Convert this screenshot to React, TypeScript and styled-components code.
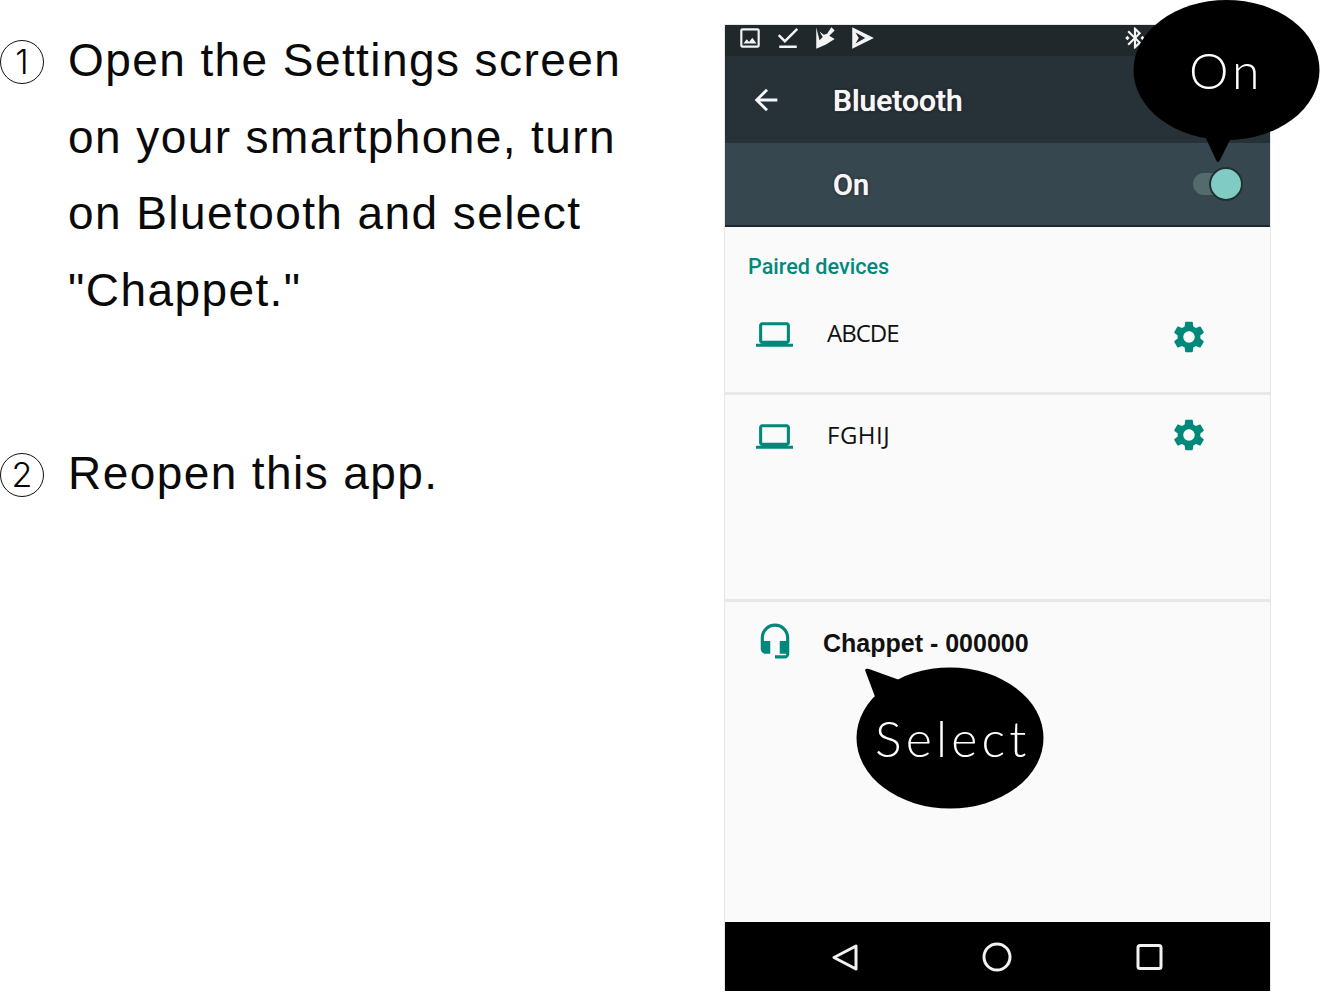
import styled, { createGlobalStyle } from "styled-components";
import {
  MdArrowBack,
  MdBluetoothConnected,
  MdDownloadDone,
  MdHeadsetMic,
  MdLaptop,
  MdOutlineImage,
  MdSettings,
} from "react-icons/md";

const GlobalStyle = createGlobalStyle`
  html, body {
    margin: 0;
    padding: 0;
    background: #ffffff;
  }
  * {
    box-sizing: border-box;
  }
`;

const App = () => {
  return (
    <Page>
      <GlobalStyle />
      <Steps>
        <Step>
          <StepNumber>1</StepNumber>
          <StepText>
            Open the Settings screen
            <br />
            on your smartphone, turn
            <br />
            on Bluetooth and select
            <br />
            "Chappet."
          </StepText>
        </Step>
        <Step>
          <StepNumber>2</StepNumber>
          <StepText>Reopen this app.</StepText>
        </Step>
      </Steps>

      <Phone>
        <StatusBar>
          <MdOutlineImage size={26} />
          <MdDownloadDone size={30} />
          <StoreIcon viewBox="0 0 24 24">
            <path
              d="M3 2v20l9-4 8-5-5-3 5-5-3-3-4 6-3 1-4-3 3 5-3 3z"
              fill="#f4f4f4"
            />
          </StoreIcon>
          <StoreIcon viewBox="0 0 24 24">
            <path
              d="M3 2v20l20-10L3 2zm3 5 9 5-9 5 3-5-3-5z"
              fill="#f4f4f4"
              fillRule="evenodd"
            />
          </StoreIcon>
          <StatusRight>
            <MdBluetoothConnected size={26} />
          </StatusRight>
        </StatusBar>

        <AppBar>
          <MdArrowBack size={34} />
          <AppBarTitle>Bluetooth</AppBarTitle>
        </AppBar>

        <SwitchRow>
          <SwitchLabel>On</SwitchLabel>
          <Toggle>
            <ToggleThumb />
          </Toggle>
        </SwitchRow>

        <PairedSection>
          <SectionLabel>Paired devices</SectionLabel>
          <DeviceRow>
            <DeviceIcon>
              <MdLaptop size={37} />
            </DeviceIcon>
            <DeviceName $tracking={-1}>ABCDE</DeviceName>
            <GearIcon $offset={3}>
              <MdSettings size={38} />
            </GearIcon>
          </DeviceRow>
        </PairedSection>

        <DeviceSection>
          <DeviceRow>
            <DeviceIcon>
              <MdLaptop size={37} />
            </DeviceIcon>
            <DeviceName $tracking={0.5}>FGHIJ</DeviceName>
            <GearIcon $offset={-1}>
              <MdSettings size={38} />
            </GearIcon>
          </DeviceRow>
        </DeviceSection>

        <AvailableSection>
          <HeadsetIcon>
            <MdHeadsetMic size={38} />
          </HeadsetIcon>
          <AvailableName>Chappet - 000000</AvailableName>
        </AvailableSection>

        <NavBar>
          <NavIcon viewBox="0 0 30 30">
            <path d="M26 4v23L4 15.5 26 4z" />
          </NavIcon>
          <NavIcon viewBox="0 0 30 30">
            <circle cx="15" cy="15" r="13" />
          </NavIcon>
          <NavIcon viewBox="0 0 30 30">
            <rect x="4" y="3.5" width="23" height="23" rx="2" />
          </NavIcon>
        </NavBar>

        <OnBubble>
          <BubbleShape viewBox="0 0 187 165">
            <ellipse cx="93.5" cy="70" rx="93" ry="70" fill="#000" />
            <path d="M70 132h31l-14 28q-2 4-4 0z" fill="#000" />
          </BubbleShape>
          <OnBubbleText>On</OnBubbleText>
        </OnBubble>

        <SelectBubble>
          <BubbleShape viewBox="0 0 188 143">
            <ellipse cx="94" cy="72" rx="93.5" ry="70.5" fill="#000" />
            <path d="M9 4q1-2 4-1l36 13-28 20z" fill="#000" />
          </BubbleShape>
          <SelectBubbleText>Select</SelectBubbleText>
        </SelectBubble>
      </Phone>
    </Page>
  );
};

export default App;

const Page = styled.div`
  width: 1320px;
  height: 993px;
  overflow: hidden;
  display: flex;
  align-items: flex-start;
  background: #ffffff;
`;

const Steps = styled.div`
  width: 724px;
  flex: none;
  display: flex;
  flex-direction: column;
  gap: 106px;
  padding-top: 22px;
`;

const Step = styled.div`
  display: flex;
  align-items: flex-start;
`;

const StepNumber = styled.div`
  width: 44px;
  height: 44px;
  flex: none;
  margin-top: 18px;
  margin-right: 24px;
  display: flex;
  align-items: center;
  justify-content: center;
  border: 1.5px solid #111111;
  border-radius: 50%;
  font-family: Inter, sans-serif;
  font-size: 34px;
  font-weight: 300;
  line-height: 1;
  color: #000000;
`;

const StepText = styled.div`
  font-family: "Liberation Sans", Arial, sans-serif;
  font-size: 46px;
  line-height: 76.7px;
  letter-spacing: 1.42px;
  color: #0a0a0a;
  white-space: nowrap;
`;

const Phone = styled.div`
  position: relative;
  width: 547px;
  height: 967px;
  margin-top: 24px;
  flex: none;
  display: flex;
  flex-direction: column;
  border: 1px solid #e6e6e6;
  border-bottom: none;
  background: #fafafa;
`;

const StatusBar = styled.div`
  height: 31px;
  flex: none;
  display: flex;
  align-items: center;
  gap: 10px;
  padding-left: 12px;
  padding-bottom: 5px;
  background: #20282c;
  color: #f4f4f4;
`;

const StoreIcon = styled.svg`
  width: 26px;
  height: 26px;
`;

const StatusRight = styled.div`
  margin-left: auto;
  margin-right: 122px;
  display: flex;
`;

const AppBar = styled.div`
  height: 87px;
  flex: none;
  display: flex;
  align-items: center;
  gap: 50px;
  padding-left: 24px;
  background: #263238;
  color: #f6f6f6;
`;

const AppBarTitle = styled.div`
  padding-top: 1px;
  font-family: Roboto, sans-serif;
  font-size: 30px;
  font-weight: 500;
  color: #f6f6f6;
  text-shadow: 0 0 1px #f6f6f6, 0 0 3px #000000;
`;

const SwitchRow = styled.div`
  height: 84px;
  flex: none;
  display: flex;
  align-items: center;
  justify-content: space-between;
  padding: 0 27px 0 108px;
  background: #37474f;
  border-bottom: 2px solid #1c2a30;
`;

const SwitchLabel = styled.div`
  padding-top: 2px;
  font-family: Roboto, sans-serif;
  font-size: 29px;
  font-weight: 500;
  color: #f6f6f6;
  text-shadow: 0 0 1px #f6f6f6, 0 0 3px #000000;
`;

const Toggle = styled.div`
  position: relative;
  width: 50px;
  height: 22px;
  border-radius: 11px;
  background: #536b6d;
`;

const ToggleThumb = styled.div`
  position: absolute;
  right: 0;
  top: -6px;
  width: 34px;
  height: 34px;
  border-radius: 50%;
  background: #80cbc4;
  border: 2px solid #22302f;
`;

const PairedSection = styled.section`
  height: 168px;
  flex: none;
  padding-top: 27px;
  border-bottom: 3px solid #e8e8e8;
`;

const SectionLabel = styled.div`
  padding-left: 23px;
  font-family: Roboto, sans-serif;
  font-size: 21.6px;
  font-weight: 500;
  line-height: 26px;
  color: #00897b;
  margin-bottom: 35px;
`;

const DeviceSection = styled.section`
  height: 207px;
  flex: none;
  padding-top: 22px;
  border-bottom: 3px solid #e8e8e8;
`;

const DeviceRow = styled.div`
  display: flex;
  align-items: flex-start;
  padding: 0 62px 0 31px;
`;

const DeviceIcon = styled.div`
  width: 37px;
  height: 38px;
  flex: none;
  display: flex;
  align-items: center;
  color: #00897b;
`;

const DeviceName = styled.div<{ $tracking: number }>`
  margin-left: 34px;
  font-family: "Open Sans", sans-serif;
  font-size: 24px;
  font-weight: 500;
  line-height: 36px;
  letter-spacing: ${(p) => p.$tracking}px;
  color: #111111;
`;

const GearIcon = styled.div<{ $offset: number }>`
  margin-left: auto;
  margin-top: ${(p) => p.$offset}px;
  display: flex;
  color: #00897b;
`;

const AvailableSection = styled.section`
  flex: 1;
  display: flex;
  align-items: flex-start;
  padding: 20px 0 0 31px;
`;

const HeadsetIcon = styled.div`
  display: flex;
  color: #00897b;
`;

const AvailableName = styled.div`
  margin-left: 29px;
  font-family: "Liberation Sans", Arial, sans-serif;
  font-size: 25px;
  font-weight: 700;
  line-height: 42px;
  color: #111111;
`;

const NavBar = styled.div`
  height: 69px;
  flex: none;
  display: flex;
  align-items: center;
  gap: 122px;
  padding-left: 105px;
  background: #000000;
`;

const NavIcon = styled.svg`
  width: 30px;
  height: 30px;
  fill: none;
  stroke: #f2f2f2;
  stroke-width: 3;
  stroke-linejoin: round;
`;

const OnBubble = styled.div`
  position: absolute;
  left: 408px;
  top: -25px;
  width: 187px;
  height: 165px;
`;

const SelectBubble = styled.div`
  position: absolute;
  left: 131px;
  top: 641px;
  width: 188px;
  height: 143px;
`;

const BubbleShape = styled.svg`
  display: block;
  width: 100%;
  height: 100%;
`;

const OnBubbleText = styled.div`
  position: absolute;
  left: 56px;
  top: 40px;
  font-family: Lato, sans-serif;
  font-size: 50px;
  font-weight: 300;
  line-height: 60px;
  letter-spacing: 4px;
  color: #ffffff;
`;

const SelectBubbleText = styled.div`
  position: absolute;
  left: 19px;
  top: 42px;
  font-family: Lato, sans-serif;
  font-size: 50px;
  font-weight: 300;
  line-height: 60px;
  letter-spacing: 4.2px;
  color: #ffffff;
`;
